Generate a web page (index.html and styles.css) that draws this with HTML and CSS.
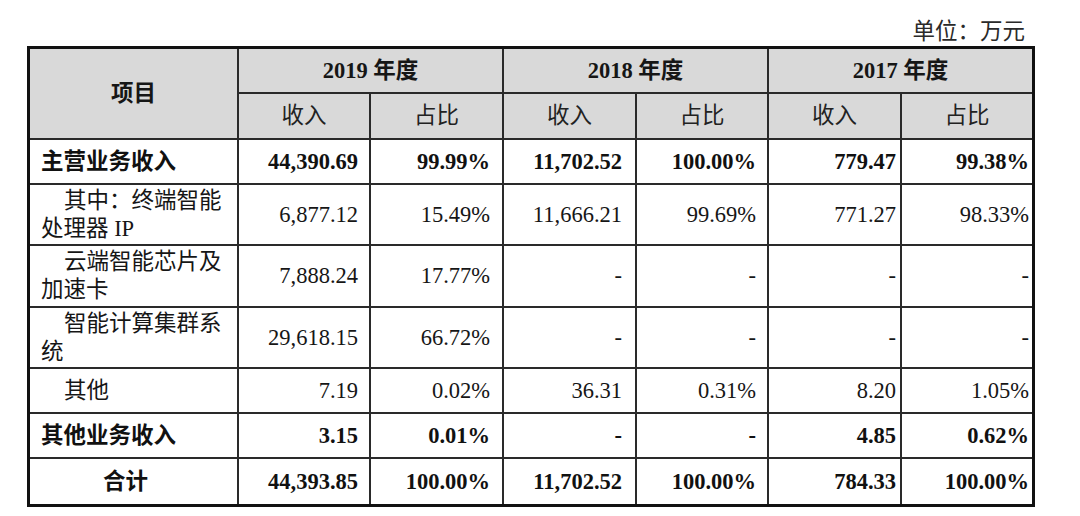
FILE: index.html
```html
<!DOCTYPE html>
<html lang="zh-CN">
<head>
<meta charset="utf-8">
<title>收入构成</title>
<link rel="stylesheet" href="styles.css">
</head>
<body>
<div class="page">
  <div class="unit">单位：万元</div>
  <table class="tbl">
    <colgroup>
      <col class="w1"><col class="w2"><col class="w3"><col class="w4"><col class="w5"><col class="w6"><col class="w7">
    </colgroup>
    <thead>
      <tr class="h1">
        <th rowspan="2" class="item">项目</th>
        <th colspan="2" class="year">2019 年度</th>
        <th colspan="2" class="year">2018 年度</th>
        <th colspan="2" class="year last">2017 年度</th>
      </tr>
      <tr class="h2">
        <th class="sub">收入</th><th class="sub">占比</th>
        <th class="sub">收入</th><th class="sub">占比</th>
        <th class="sub">收入</th><th class="sub last">占比</th>
      </tr>
    </thead>
    <tbody>
      <tr class="r1 bold">
        <td class="name">主营业务收入</td>
        <td class="n c2">44,390.69</td><td class="n c3">99.99%</td>
        <td class="n c4">11,702.52</td><td class="n c5">100.00%</td>
        <td class="n c6">779.47</td><td class="n c7 last">99.38%</td>
      </tr>
      <tr class="r2">
        <td class="name"><span class="ind">其中：终端智能</span><br>处理器 IP</td>
        <td class="n c2">6,877.12</td><td class="n c3">15.49%</td>
        <td class="n c4">11,666.21</td><td class="n c5">99.69%</td>
        <td class="n c6">771.27</td><td class="n c7 last">98.33%</td>
      </tr>
      <tr class="r2 tall">
        <td class="name"><span class="ind">云端智能芯片及</span><br>加速卡</td>
        <td class="n c2">7,888.24</td><td class="n c3">17.77%</td>
        <td class="n c4">-</td><td class="n c5">-</td>
        <td class="n c6">-</td><td class="n c7 last">-</td>
      </tr>
      <tr class="r2">
        <td class="name"><span class="ind">智能计算集群系</span><br>统</td>
        <td class="n c2">29,618.15</td><td class="n c3">66.72%</td>
        <td class="n c4">-</td><td class="n c5">-</td>
        <td class="n c6">-</td><td class="n c7 last">-</td>
      </tr>
      <tr class="r1">
        <td class="name"><span class="ind">其他</span></td>
        <td class="n c2">7.19</td><td class="n c3">0.02%</td>
        <td class="n c4">36.31</td><td class="n c5">0.31%</td>
        <td class="n c6">8.20</td><td class="n c7 last">1.05%</td>
      </tr>
      <tr class="r1 bold">
        <td class="name">其他业务收入</td>
        <td class="n c2">3.15</td><td class="n c3">0.01%</td>
        <td class="n c4">-</td><td class="n c5">-</td>
        <td class="n c6">4.85</td><td class="n c7 last">0.62%</td>
      </tr>
      <tr class="r1 bold total">
        <td class="name center">合计</td>
        <td class="n c2">44,393.85</td><td class="n c3">100.00%</td>
        <td class="n c4">11,702.52</td><td class="n c5">100.00%</td>
        <td class="n c6">784.33</td><td class="n c7 last">100.00%</td>
      </tr>
    </tbody>
  </table>
</div>
</body>
</html>
```

FILE: styles.css
```css
html, body {
  margin: 0;
  padding: 0;
  background: #ffffff;
}

body {
  font-family: "Liberation Serif", "Noto Sans CJK SC", serif;
  font-size: 22.5px;
  color: #161616;
}

.page {
  padding: 18px 0 0 27px;
  width: 1008px;
}

.unit {
  height: 28px;
  line-height: 28px;
  text-align: right;
  padding-right: 10px;
  color: #2a2a2a;
}

.tbl {
  border-collapse: separate;
  border-spacing: 0;
  table-layout: fixed;
  width: 1008px;
  border: 3px solid #111;
}

.w1 { width: 209px; }
.w2 { width: 132px; }
.w3 { width: 133px; }
.w4 { width: 133px; }
.w5 { width: 132px; }
.w6 { width: 133px; }
.w7 { width: 130px; }

.tbl th,
.tbl td {
  border-right: 2px solid #2a2a2a;
  border-bottom: 2px solid #2a2a2a;
  padding: 0;
  vertical-align: middle;
  line-height: 28px;
  white-space: nowrap;
  overflow: hidden;
}

.tbl .last {
  border-right: none;
}

.tbl .total td {
  border-bottom: none;
}

.tbl th {
  background: #d9d9d9;
  text-align: center;
}

.h1 { height: 45px; }
.h2 { height: 46px; }

.item {
  font-weight: 700;
  padding-right: 16px;
}

.year {
  font-weight: 700;
}

.sub {
  font-weight: 400;
  color: #222;
}

.r1 { height: 45px; }
.r2 { height: 61px; }
.r2.tall { height: 62px; }

.name {
  text-align: left;
  padding-left: 11px !important;
}

.name.center {
  text-align: center;
  padding-left: 0 !important;
  padding-right: 16px !important;
}

.ind {
  padding-left: 23px;
}

.bold td {
  font-weight: 700;
  color: #111;
}

.n { text-align: right; }
.c2 { padding-right: 11px !important; }
.c3 { padding-right: 12px !important; }
.c4 { padding-right: 13px !important; }
.c5 { padding-right: 11px !important; }
.c6 { padding-right: 4px !important; }
.c7 { padding-right: 3px !important; }
```
